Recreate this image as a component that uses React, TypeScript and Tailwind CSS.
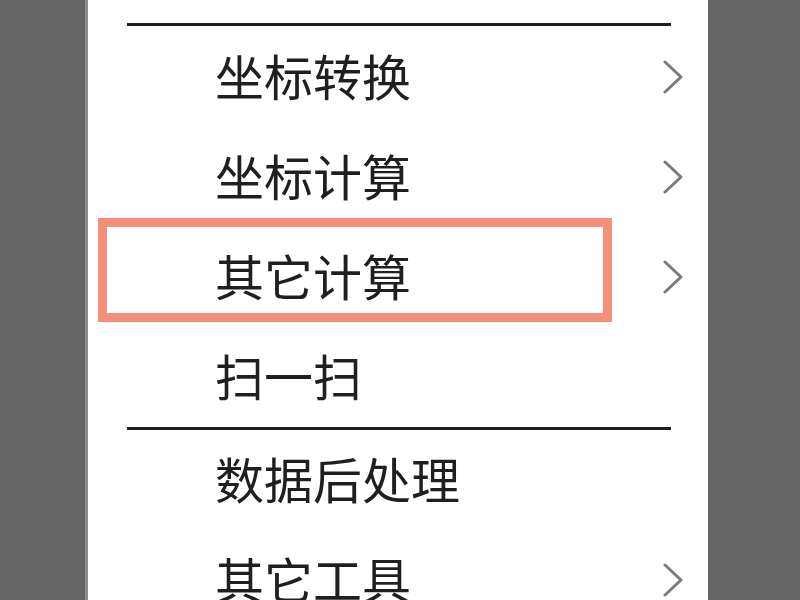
import React from "react";

const Chevron = () => (
  <svg width="22" height="34" viewBox="0 0 22 34" className="shrink-0">
    <polyline points="3,2 19,17 3,32" fill="none" stroke="#7a7a7a" strokeWidth="3" strokeLinecap="round" strokeLinejoin="round" />
  </svg>
);

const Divider = () => <div className="ml-[39px] mr-[37px] h-[3px] bg-[#1e1e1e]" />;

type Item = { label: string; arrow: boolean; marked?: boolean };

const Row = ({ item }: { item: Item }) => (
  <div className="relative flex h-[100px] items-center pl-[127px] pr-[24px]">
    {item.marked && (
      <div className="absolute left-[10px] top-[-9px] h-[104px] w-[514px] border-[9px] border-[#f48f7b]" />
    )}
    <span className="relative -top-[3px] flex-1 text-[49px] leading-none text-[#1f1f1f]">{item.label}</span>
    {item.arrow && <Chevron />}
  </div>
);

export default function App() {
  const groupA: Item[] = [
    { label: "坐标转换", arrow: true },
    { label: "坐标计算", arrow: true },
    { label: "其它计算", arrow: true, marked: true },
    { label: "扫一扫", arrow: false },
  ];
  const groupB: Item[] = [
    { label: "数据后处理", arrow: false },
    { label: "其它工具", arrow: true },
  ];

  return (
    <div
      className="flex h-[600px] w-[800px] overflow-hidden bg-[#666666]"
      style={{ fontFamily: '"Noto Sans CJK SC", "Noto Sans", sans-serif' }}
    >
      <div className="ml-[85px] w-[623px] overflow-hidden border-l-[3px] border-[#8e8e8e] bg-white">
        <div className="h-[23px] overflow-hidden">
          <div className="-mt-[84px] flex h-[100px] items-center pl-[130px]">
            <span className="text-[49px] leading-none text-[#e2e2e2]">道路放样</span>
          </div>
        </div>
        <Divider />
        <div className="mt-[1px]">
          {groupA.map((item) => (
            <Row key={item.label} item={item} />
          ))}
        </div>
        <Divider />
        {groupB.map((item) => (
          <Row key={item.label} item={item} />
        ))}
      </div>
    </div>
  );
}
